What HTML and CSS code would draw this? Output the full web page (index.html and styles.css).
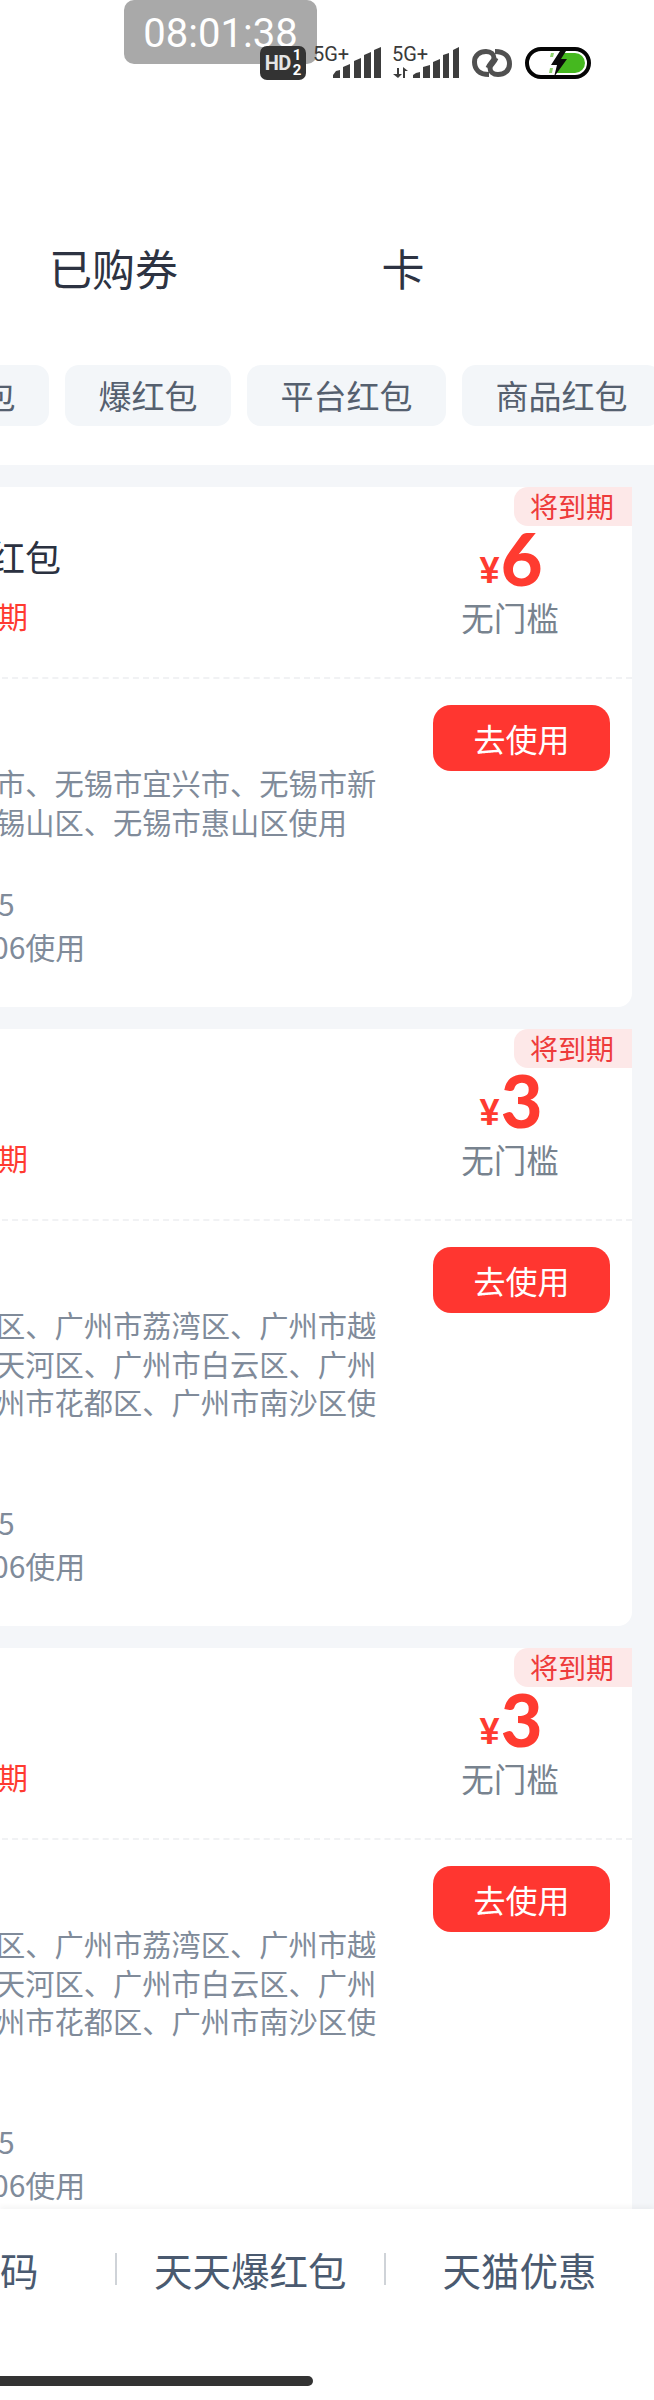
FILE: index.html
```html
<!DOCTYPE html>
<html lang="zh-CN">
<head>
<meta charset="utf-8">
<title>红包卡券</title>
<link rel="stylesheet" href="styles.css">
</head>
<body>
<div class="page">
  <header class="status">
    <div class="clock">08:01:38</div>
    <div class="sys">
      <div class="hd"><span class="hd-t">HD</span><span class="hd-n"><i>1</i><i>2</i></span></div>
      <div class="sim sim-a">
        <span class="net">5G+</span>
        <svg class="bars" width="48" height="31" viewBox="0 0 48 31"><g fill="#3d3d3d"><path d="M0 31v-3l3-4 4-1v8z"/><path d="M10 31V20l7-3v14z"/><path d="M21 31V14l7-3v20z"/><path d="M31 31V8l7-3v26z"/><path d="M41 31V3l7-3v31z"/></g></svg>
      </div>
      <div class="sim sim-b">
        <span class="net">5G+</span>
        <svg class="bars-b" width="67" height="31" viewBox="0 0 67 31"><g fill="#3d3d3d"><path d="M5 21h2v6h3l-4 4-5-4h4zM11 20l5 4h-3v7h-2z"/><path d="M21 31v-3l3-2 4-1v6z"/><path d="M31 31V20l7-2v13z"/><path d="M41 31V15l7-3v19z"/><path d="M51 31V8l6-2v25z"/><path d="M61 31V3l6-3v31z"/></g></svg>
      </div>
      <svg class="link" width="40" height="28" viewBox="0 0 40 28"><g fill="none" stroke="#505050" stroke-width="5"><path d="M17 25.500C7 25.500 2.500 20 2.500 13 2.500 6 8 2.500 14 2.500c5 0 8 3 8 6.500 0 3-4 5-6 10"/><path d="M23 2.500C33 2.500 37.500 8 37.500 15 37.500 22 32 25.500 26 25.500c-5 0-8-3-8-6.500 0-3 4-5 6-10"/></g></svg>
      <svg class="batt" width="68" height="34" viewBox="0 0 68 34"><rect x="3" y="3" width="62" height="28" rx="14" fill="#fff" stroke="#050505" stroke-width="4"/><path d="M37 7h14a10 10 0 0 1 0 20H33z" fill="#45b81f"/><path d="M27 7h3l-1 4h-3zM26 22h3l-1 5h-3z" fill="#8fd46f"/><path d="M36 5h6l-5 8h6L30 31l3-12h-6z" fill="#0c0c0c"/></svg>
    </div>
  </header>

  <nav class="tabs">
    <span class="tab tab-a">已购券</span>
    <span class="tab tab-b">卡</span>
  </nav>

  <div class="chips">
    <span class="chip">红包</span>
    <span class="chip">爆红包</span>
    <span class="chip">平台红包</span>
    <span class="chip">商品红包</span>
  </div>

  <main class="list">
    <article class="card">
      <span class="badge">将到期</span>
      <div class="top">
        <div class="info">
          <div class="title">红包</div>
          <div class="expire">期</div>
        </div>
        <div class="price">
          <div class="amount"><span class="yen">¥</span><span class="num">6</span></div>
          <div class="rule">无门槛</div>
        </div>
      </div>
      <div class="bottom">
        <div class="detail">
          <p class="desc">市、无锡市宜兴市、无锡市新<br>锡山区、无锡市惠山区使用</p>
          <p class="valid"><span class="v1">5</span><br><span class="v2">06使用</span></p>
        </div>
        <button class="use">去使用</button>
      </div>
    </article>

    <article class="card">
      <span class="badge">将到期</span>
      <div class="top">
        <div class="info">
          <div class="title">&nbsp;</div>
          <div class="expire">期</div>
        </div>
        <div class="price">
          <div class="amount"><span class="yen">¥</span><span class="num">3</span></div>
          <div class="rule">无门槛</div>
        </div>
      </div>
      <div class="bottom">
        <div class="detail">
          <p class="desc">区、广州市荔湾区、广州市越<br>天河区、广州市白云区、广州<br>州市花都区、广州市南沙区使<br>&nbsp;</p>
          <p class="valid"><span class="v1">5</span><br><span class="v2">06使用</span></p>
        </div>
        <button class="use">去使用</button>
      </div>
    </article>

    <article class="card">
      <span class="badge">将到期</span>
      <div class="top">
        <div class="info">
          <div class="title">&nbsp;</div>
          <div class="expire">期</div>
        </div>
        <div class="price">
          <div class="amount"><span class="yen">¥</span><span class="num">3</span></div>
          <div class="rule">无门槛</div>
        </div>
      </div>
      <div class="bottom">
        <div class="detail">
          <p class="desc">区、广州市荔湾区、广州市越<br>天河区、广州市白云区、广州<br>州市花都区、广州市南沙区使<br>&nbsp;</p>
          <p class="valid"><span class="v1">5</span><br><span class="v2">06使用</span></p>
        </div>
        <button class="use">去使用</button>
      </div>
    </article>
  </main>

  <footer class="dock">
    <div class="dock-row">
      <span class="dock-a">码</span>
      <span class="sep"></span>
      <span class="dock-b">天天爆红包</span>
      <span class="sep"></span>
      <span class="dock-c">天猫优惠</span>
    </div>
    <div class="home"></div>
  </footer>
</div>
</body>
</html>
```

FILE: styles.css
```css
* { box-sizing: border-box; }
html, body { margin: 0; padding: 0; background: #fff; }
body { font-family: "Noto Sans CJK SC", "Noto Sans", sans-serif; }
.page { width: 654px; height: 2400px; overflow: hidden; position: relative; background: #fff; }

/* status */
.status { height: 80px; padding-left: 124px; position: relative; }
.clock { width: 193px; height: 64px; background: #a9a9a9; border-radius: 10px; color: #fff; font: 400 40px/68px Roboto, sans-serif; text-align: center; }
.sys { position: absolute; left: 260px; top: 46px; display: flex; align-items: flex-start; }
.hd { width: 46px; height: 34px; background: #333; border-radius: 7px; color: #fff; display: flex; align-items: center; justify-content: center; font-family: Roboto, sans-serif; font-weight: 700; }
.hd-t { font-size: 20px; letter-spacing: -0.5px; color: #e4e4e4; }
.hd-n { display: flex; flex-direction: column; font-size: 15px; line-height: 15px; margin-left: 2px; }
.hd-n i { font-style: normal; }
.sim { position: relative; height: 34px; }
.sim-a { width: 68px; margin-left: 7px; }
.sim-b { width: 67px; margin-left: 11px; }
.net { position: absolute; left: 0; top: -3px; font: 400 20px/22px Roboto, sans-serif; color: #3a3a3a; }
.bars { position: absolute; right: 0; top: 1px; }
.bars-b { position: absolute; right: 0; top: 1px; }
.link { margin: 3px 0 0 13px; }
.batt { margin-left: 12px; }

/* tabs */
.tabs { height: 285px; }
.tab { display: inline-block; font-size: 43px; line-height: 60px; color: #2d3342; margin-top: 157px; }
.tab-a { margin-left: 49px; }
.tab-b { margin-left: 200px; }

/* chips */
.chips { display: flex; gap: 16px; margin-left: -84px; white-space: nowrap; height: 100px; position: relative; }
.chips::after { content: ""; position: absolute; right: -84px; bottom: 0; width: 37px; height: 6px; background: #f4f6f9; border-radius: 12px 0 0 0; }
.chip { flex: none; height: 61px; padding: 0 33.5px; background: #f3f6f9; border-radius: 14px; font-size: 33px; line-height: 60px; color: #55606f; }

/* list */
.list { height: 1744px; background: #f4f6f9; overflow: hidden; padding-top: 22px; }
.card { position: relative; width: 640px; margin-left: -8px; margin-bottom: 22px; background: #fff; border-radius: 0 14px 14px 0; }
.badge { position: absolute; right: 0; top: 0; width: 118px; height: 39px; background: #fde8e8; border-radius: 14px 0 0 14px; color: #ee3b3b; font-size: 28px; line-height: 38px; text-align: center; padding-right: 2px; }
.top { height: 192px; display: flex; justify-content: space-between; border-bottom: 2px dashed #f1f2f4; }
.info { padding-top: 45px; margin-left: -3px; }
.title { font-size: 36px; line-height: 48px; color: #2b3140; }
.expire { font-size: 30px; line-height: 40px; color: #ff3b30; margin: 15px 0 0 9px; }
.price { width: 170px; margin-right: 37px; text-align: center; padding-top: 35px; }
.amount { height: 72px; display: flex; justify-content: center; align-items: baseline; line-height: 72px; font-family: Lato, "Liberation Sans", sans-serif; font-weight: 900; color: #ff3b30; }
.yen { font-family: "Liberation Sans", sans-serif; font-weight: 700; font-size: 36px; margin-right: 3px; position: relative; top: -3px; left: 2px; }
.num { font-size: 72px; }
.rule { font-size: 32.500px; line-height: 40px; color: #78838f; margin-top: 3px; }
.bottom { display: flex; justify-content: space-between; align-items: flex-start; padding: 26px 22px 39px 0; }
.detail { padding-top: 58px; white-space: nowrap; margin-left: 4px; }
.desc { margin: 0; font-size: 29.250px; line-height: 38.500px; color: #808b9a; }
.valid { margin: 42px 0 0 -4px; font-size: 30px; line-height: 43px; color: #808b9a; }
.v1 { margin-left: 6px; }
.v2 { margin-left: 0; }
.use { width: 177px; height: 66px; border: 0; border-radius: 18px; background: #ff3630; color: #fff; font-family: inherit; font-size: 32px; padding: 0; }

/* dock */
.dock { height: 191px; background: #fff; position: relative; box-shadow: 0 -3px 5px rgba(0, 0, 0, 0.04); }
.dock-row { display: flex; align-items: center; height: 120px; white-space: nowrap; font-size: 38.500px; color: #4a5a70; }
.dock-a { width: 38px; margin-right: 77px; }
.sep { width: 2px; height: 32px; background: #cfd3d8; flex: none; }
.dock-b { margin: 0 37px; }
.dock-c { margin-left: 57px; }
.home { position: absolute; left: 0; top: 167px; width: 313px; height: 10px; background: #333; border-radius: 0 5px 5px 0; }
```
